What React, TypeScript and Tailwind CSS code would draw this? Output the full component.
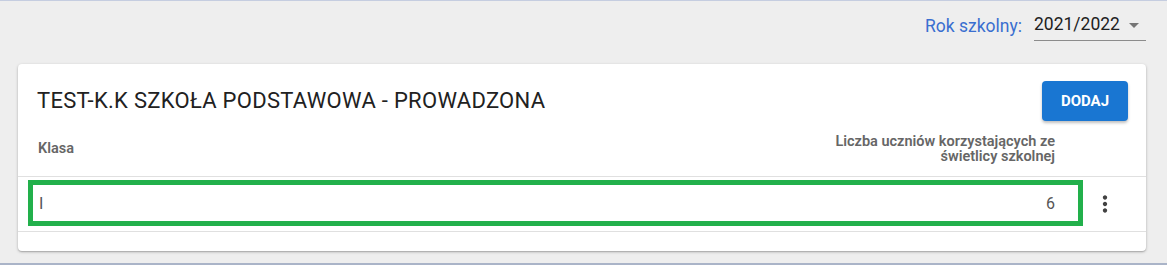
export default function App() {
  const rows = [{ klasa: "I", liczba: 6 }]

  return (
    <div className="flex h-[265px] w-full flex-col border-t border-[#c5cde0] bg-[#eeeeee] font-['Roboto',sans-serif]">
      {/* rok szkolny */}
      <div className="flex items-center justify-end pr-[21px] pt-[10px]">
        <span className="mr-[12px] text-[17.5px] text-[#3a6fd0]">Rok szkolny:</span>
        <div className="flex h-[30px] w-[112px] items-center justify-between border-b border-[#8c8c8c] pb-[2px]">
          <span className="text-[17.5px] text-[#212121]">2021/2022</span>
          <svg viewBox="0 0 24 24" className="h-6 w-6 fill-[#757575]">
            <path d="M7 10l5 5 5-5z" />
          </svg>
        </div>
      </div>

      {/* karta */}
      <div className="mx-[18px] mr-[21px] mt-[23px] rounded-[4px] bg-white pb-[19px] shadow-[0_1px_3px_rgba(0,0,0,0.25),0_1px_1px_rgba(0,0,0,0.12)]">
        <div className="flex items-center justify-between pl-[19px] pr-[18px] pt-[17px]">
          <h2 className="text-[22px] leading-[40px] tracking-[0.3px] text-[#212121]">TEST-K.K SZKOŁA PODSTAWOWA - PROWADZONA</h2>
          <button className="h-[40px] w-[86px] rounded-[4px] bg-[#1976d2] text-[15px] font-bold text-white shadow-[0_2px_3px_rgba(0,0,0,0.25)]">
            DODAJ
          </button>
        </div>

        <div className="flex h-[56px] items-center border-b border-[#e0e0e0] pl-[20px] pr-[91px] text-[14.5px] font-semibold leading-[15px] text-[#666666]">
          <div className="flex-1">Klasa</div>
          <div className="text-right">
            Liczba uczniów korzystających ze
            <br />
            świetlicy szkolnej
          </div>
        </div>

        {rows.map((r) => (
          <div key={r.klasa} className="relative flex h-[55px] items-center border-b border-[#e0e0e0] pl-[21px] text-[16px] text-[#555555]">
            <div className="pointer-events-none absolute left-[10px] top-[3px] h-[46px] w-[1055px] border-[5px] border-[#22b04b]" />
            <div className="flex-1">{r.klasa}</div>
            <div className="mr-[40px]">{r.liczba}</div>
            <div className="flex w-[51px] justify-start">
              <svg viewBox="0 0 24 24" className="-ml-[3px] h-[26px] w-[26px] fill-[#424242]">
                <path d="M12 8c1.1 0 2-.9 2-2s-.9-2-2-2-2 .9-2 2 .9 2 2 2zm0 2c-1.1 0-2 .9-2 2s.9 2 2 2 2-.9 2-2-.9-2-2-2zm0 6c-1.1 0-2 .9-2 2s.9 2 2 2 2-.9 2-2-.9-2-2-2z" />
              </svg>
            </div>
          </div>
        ))}
      </div>

      <div className="mt-auto h-[2px] bg-[#aab4c8]" />
    </div>
  )
}
